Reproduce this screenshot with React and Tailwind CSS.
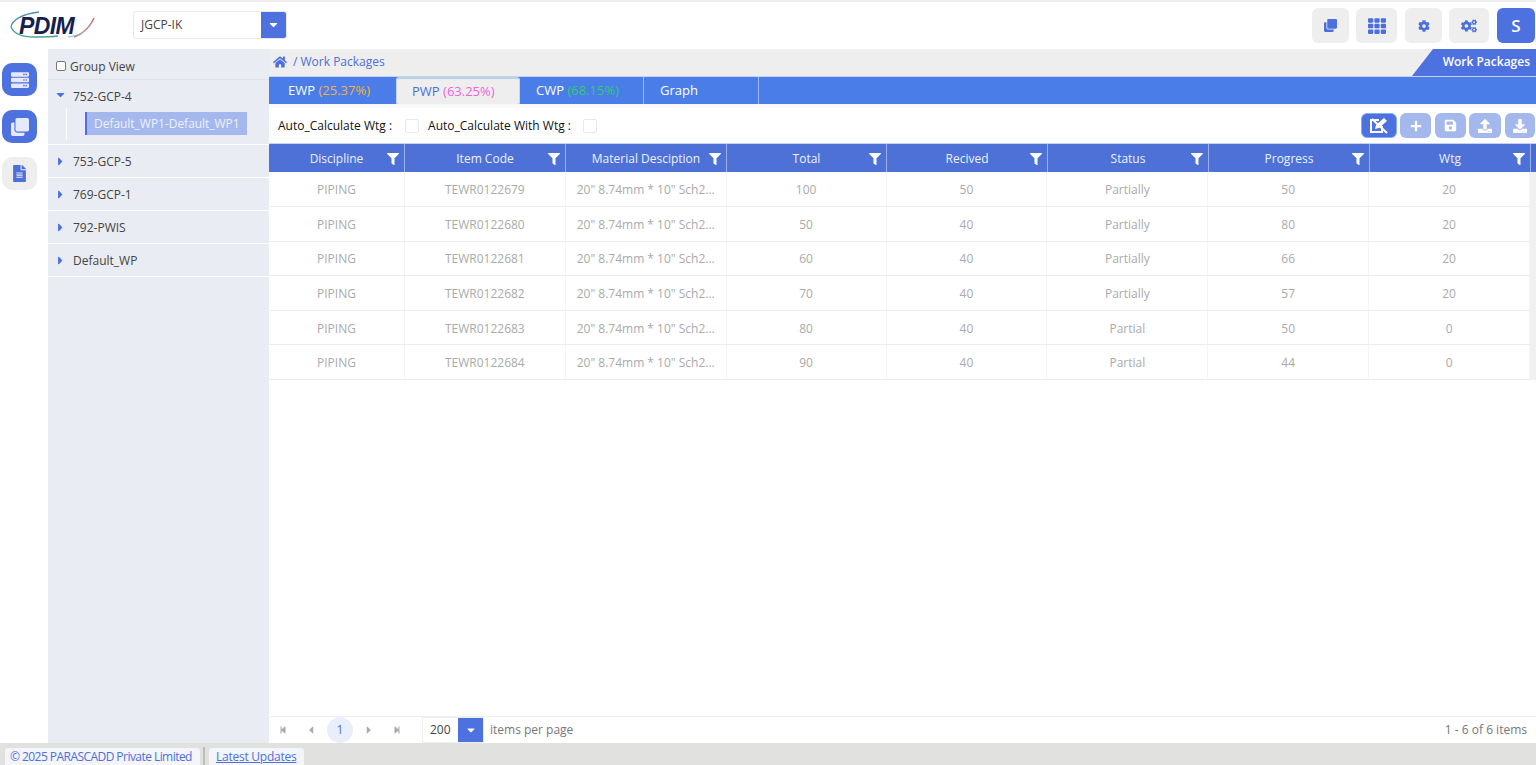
import React from "react";
import {
  FaHome,
  FaFilter,
  FaServer,
  FaClone,
  FaFileAlt,
  FaTh,
  FaCog,
  FaCogs,
  FaPlus,
  FaSave,
  FaUpload,
  FaDownload,
  FaStepBackward,
  FaStepForward,
  FaCaretLeft,
  FaCaretRight,
  FaCaretDown,
} from "react-icons/fa";

const columns = [
  { label: "Discipline", width: "w-[136px]" },
  { label: "Item Code", width: "w-[161px]" },
  { label: "Material Desciption", width: "w-[161px]" },
  { label: "Total", width: "w-[160px]" },
  { label: "Recived", width: "w-[161px]" },
  { label: "Status", width: "w-[161px]" },
  { label: "Progress", width: "w-[161px]" },
  { label: "Wtg", width: "w-[161px]" },
];

const rows = [
  ["PIPING", "TEWR0122679", '20" 8.74mm * 10" Sch2...', "100", "50", "Partially", "50", "20"],
  ["PIPING", "TEWR0122680", '20" 8.74mm * 10" Sch2...', "50", "40", "Partially", "80", "20"],
  ["PIPING", "TEWR0122681", '20" 8.74mm * 10" Sch2...', "60", "40", "Partially", "66", "20"],
  ["PIPING", "TEWR0122682", '20" 8.74mm * 10" Sch2...', "70", "40", "Partially", "57", "20"],
  ["PIPING", "TEWR0122683", '20" 8.74mm * 10" Sch2...', "80", "40", "Partial", "50", "0"],
  ["PIPING", "TEWR0122684", '20" 8.74mm * 10" Sch2...', "90", "40", "Partial", "44", "0"],
];

const treeItems = ["753-GCP-5", "769-GCP-1", "792-PWIS", "Default_WP"];

const Logo = () => (
  <div className="relative w-[86px] h-[30px] -mt-[2px]">
    <svg className="absolute inset-0" width="86" height="30" viewBox="0 0 86 30" fill="none">
      <path d="M1 17C2 10 12 4 29 2" stroke="#4d8fb0" strokeWidth="1.3" />
      <path d="M1 17C4 24 12 27 24 27C32 27 40 27 48 26" stroke="#4aa58f" strokeWidth="1.4" />
      <path d="M64 27C73 24 80 17 84 8" stroke="#e0705f" strokeWidth="1.5" />
      <path d="M58 27C68 26 76 22 81 14" stroke="#8fb2d9" strokeWidth="1" />
    </svg>
    <span className="absolute left-[9px] top-[2px] text-[23px] leading-[28px] font-bold italic text-[#14204d] font-['Liberation_Sans',sans-serif] tracking-[-0.6px]">
      PDIM
    </span>
  </div>
);

const TopButton = ({ width, children }) => (
  <div className={`${width} h-[35px] rounded-md bg-[#eeeeee] flex items-center justify-center text-[#4d6fdc]`}>
    {children}
  </div>
);

const RailButton = ({ active, children }) => (
  <div
    className={`w-[35px] h-[33px] rounded-[10px] flex items-center justify-center ${
      active ? "bg-[#4d71df] text-[#e4e9fb]" : "bg-[#eeeeee] text-[#4d6fdc]"
    }`}
  >
    {children}
  </div>
);

const ActionButton = ({ active, width, children }) => (
  <div
    className={`${width} h-[25px] rounded-md flex items-center justify-center text-white ${
      active ? "bg-[#4d71df] border border-[#7fb0f5]" : "bg-[#a5b8ee]"
    }`}
  >
    {children}
  </div>
);

const Tab = ({ label, pct, pctColor, width, active }) => (
  <div
    className={`${width} flex items-center text-[13px] pt-[1px] ${
      active
        ? "h-[29px] bg-[#eeeeee] text-[#4d6fdc] rounded-[3px] border-x border-t-2 border-b-2 border-x-[#c9d3ea] border-t-[#b5d6de] border-b-[#4d71df]"
        : "h-full text-white border-r border-[#9db8f2]"
    }`}
  >
    <span>
      {label} {pct && <span className={`${pctColor} font-medium`}>{pct}</span>}
    </span>
  </div>
);

const App = () => {
  return (
    <div className="w-[1536px] h-[765px] overflow-hidden flex flex-col bg-white text-[12px] text-[#555] font-['Open_Sans',sans-serif]">
      {/* Header */}
      <header className="h-[49px] shrink-0 flex items-center border-t-2 border-[#eeeeee] pl-[10px] pr-[1px]">
        <Logo />
        <div className="ml-[37px] -mt-[2px] w-[154px] h-[28px] flex rounded-[3px] border border-[#e8e8e8] overflow-hidden">
          <div className="flex-1 flex items-center pl-[7px] text-[12px] text-[#444]">JGCP-IK</div>
          <div className="w-[25px] bg-[#4d71df] flex items-center justify-center text-white">
            <FaCaretDown size={13} />
          </div>
        </div>
        <div className="ml-auto flex items-center">
          <TopButton width="w-[37px]">
            <FaClone size={13} />
          </TopButton>
          <div className="ml-[7px]">
            <TopButton width="w-[41px]">
              <FaTh size={18} />
            </TopButton>
          </div>
          <div className="ml-[8px]">
            <TopButton width="w-[37px]">
              <FaCog size={12} />
            </TopButton>
          </div>
          <div className="ml-[7px]">
            <TopButton width="w-[40px]">
              <FaCogs size={16} />
            </TopButton>
          </div>
          <div className="ml-[8px] w-[38px] h-[35px] rounded-md bg-[#4d71df] flex items-center justify-center text-white text-[17px] font-semibold">
            S
          </div>
        </div>
      </header>

      <div className="flex-1 flex min-h-0">
        {/* Icon rail */}
        <aside className="w-[48px] shrink-0 flex flex-col gap-[14px] pl-[2px] pt-[14px]">
          <RailButton active>
            <FaServer size={18} />
          </RailButton>
          <RailButton active>
            <FaClone size={18} />
          </RailButton>
          <RailButton>
            <FaFileAlt size={17} />
          </RailButton>
        </aside>

        {/* Tree */}
        <aside className="w-[221px] shrink-0 bg-[#e9ecf2] text-[12px] text-[#444]">
          <div className="h-[31px] flex items-center pl-[8px] pt-[6px] border-b border-[#e0e3ea] gap-[4px]">
            <span className="w-[10px] h-[10px] rounded-[2px] border border-[#777] bg-white -mt-[3px]" />
            <span>Group View</span>
          </div>
          <div className="border-b border-white pb-[4px]">
            <div className="h-[28px] pt-[6px] flex items-center pl-[6px]">
              <FaCaretDown size={13} className="text-[#4d71df] -mt-[6px]" />
              <span className="ml-[6px]">752-GCP-4</span>
            </div>
            <div className="ml-[18px] border-l border-white h-[32px] pl-[18px] pt-[4px]">
              <div className="w-[162px] h-[23px] bg-[#a5b8ee] border-l-2 border-[#4d71df] flex items-center pl-[7px] text-[#eef1fb] tracking-[-0.03px] whitespace-nowrap">
                Default_WP1-Default_WP1
              </div>
            </div>
          </div>
          {treeItems.map((item) => (
            <div key={item} className="h-[33px] flex items-center pl-[6px] pt-[2px] border-b border-white">
              <FaCaretRight size={13} className="text-[#4d71df] -mt-[2px]" />
              <span className="ml-[6px]">{item}</span>
            </div>
          ))}
        </aside>

        {/* Main */}
        <main className="flex-1 min-w-0 flex flex-col">
          <div className="h-[27px] shrink-0 bg-[#eeeeee] flex items-center justify-between pl-[4px]">
            <div className="flex items-center gap-[6px] text-[12px] text-[#4d6fdc] -mt-[2px]">
              <FaHome size={14} />
              <span>/ Work Packages</span>
            </div>
            <div className="relative w-[124px] h-full self-end flex items-center justify-end pr-[6px] text-white text-[12px] font-semibold">
              <svg className="absolute inset-0" width="124" height="27" viewBox="0 0 124 27">
                <path d="M21 0H124V27H0Z" fill="#4d71df" />
              </svg>
              <span className="relative -mt-[2px]">Work Packages</span>
            </div>
          </div>

          <div className="h-[28px] shrink-0 bg-[#4a7de8] border-t border-[#c5d2f2] flex">
            <Tab label="EWP" pct="(25.37%)" pctColor="text-[#f5b041]" width="w-[127px] pl-[19px] !border-r-0" />
            <Tab label="PWP" pct="(63.25%)" pctColor="text-[#f25fe0]" width="w-[124px] pl-[15px]" active />
            <Tab label="CWP" pct="(68.15%)" pctColor="text-[#2ecc71]" width="w-[124px] pl-[16px]" />
            <Tab label="Graph" width="w-[115px] pl-[16px]" />
          </div>

          <div className="h-[4px] shrink-0 bg-[#f8f8f8]" />

          <div className="h-[35px] shrink-0 flex items-center pl-[9px] pr-[1px] text-[12px] text-[#111]">
            <span>Auto_Calculate Wtg :</span>
            <span className="ml-[13px] w-[14px] h-[14px] rounded-[2px] border border-[#e8e8e8]" />
            <span className="ml-[9px]">Auto_Calculate With Wtg :</span>
            <span className="ml-[12px] w-[14px] h-[14px] rounded-[2px] border border-[#e8e8e8]" />
            <div className="ml-auto flex items-center">
              <ActionButton width="w-[36px]" active>
                <svg width="20" height="17" viewBox="0 0 20 17" fill="none" stroke="white" strokeWidth="2">
                  <path d="M10 3H2v12h11V9" />
                  <path d="M6 12l1-4 8-7 3 3-8 7z" fill="white" stroke="none" />
                  <path d="M3 2l15 14" />
                </svg>
              </ActionButton>
              <div className="ml-[3px]">
                <ActionButton width="w-[31px]">
                  <FaPlus size={12} />
                </ActionButton>
              </div>
              <div className="ml-[4px]">
                <ActionButton width="w-[31px]">
                  <FaSave size={13} />
                </ActionButton>
              </div>
              <div className="ml-[3px]">
                <ActionButton width="w-[32px]">
                  <FaUpload size={14} />
                </ActionButton>
              </div>
              <div className="ml-[4px]">
                <ActionButton width="w-[30px]">
                  <FaDownload size={14} />
                </ActionButton>
              </div>
            </div>
          </div>

          {/* Table */}
          <div className="flex-1 min-h-0 flex flex-col">
            <div className="h-[29px] shrink-0 flex bg-[#4d71d6] border-t border-[#c5d2f2]">
              {columns.map((col) => (
                <div
                  key={col.label}
                  className={`${col.width} relative flex items-center justify-center pt-[1px] border-r border-[#9db0e8] text-[#eef1fb] text-[12px]`}
                >
                  {col.label}
                  <FaFilter size={12} className="absolute right-[5px] text-white" />
                </div>
              ))}
              <div className="flex-1 bg-[#4a6cd0]" />
            </div>
            <div className="flex-1 min-h-0 flex">
              <div className="w-[1261px]">
                {rows.map((row, r) => (
                  <div key={row[1]} className={`flex border-b border-[#ececec] ${r === 0 ? "h-[35px]" : "h-[34.6px]"}`}>
                    {row.map((cell, i) => (
                      <div
                        key={i}
                        className={`${columns[i].width} flex items-center justify-center pt-[2px] border-r border-[#f4f4f4] text-[#aaaaaa] text-[12px] whitespace-nowrap`}
                      >
                        {cell}
                      </div>
                    ))}
                  </div>
                ))}
              </div>
              <div className="flex-1 bg-[#f0f0f0] h-[208px]" />
            </div>
          </div>

          {/* Pager */}
          <div className="h-[27px] shrink-0 border-t border-[#eeeeee] flex items-center pl-[10px] pr-[9px] text-[12px] text-[#777]">
            <FaStepBackward size={8} className="text-[#aaa]" />
            <FaCaretLeft size={12} className="ml-[18px] text-[#aaa]" />
            <div className="ml-[10px] w-[26px] h-[26px] rounded-full bg-[#e8effb] text-[#4d6fdc] flex items-center justify-center">
              1
            </div>
            <FaCaretRight size={12} className="ml-[10px] text-[#aaa]" />
            <FaStepForward size={8} className="ml-[18px] text-[#aaa]" />
            <div className="ml-[21px] w-[62px] h-full flex border border-[#eeeeee]">
              <div className="flex-1 flex items-center pl-[7px] text-[#444]">200</div>
              <div className="w-[25px] bg-[#4d71df] text-white flex items-center justify-center">
                <FaCaretDown size={12} />
              </div>
            </div>
            <span className="ml-[6px]">items per page</span>
            <span className="ml-auto">1 - 6 of 6 items</span>
          </div>
        </main>
      </div>

      {/* Footer */}
      <footer className="h-[22px] shrink-0 bg-[#e1e1df] flex items-end pl-[5px] text-[12px] text-[#4d6fdc]">
        <div className="h-[17px] w-[195px] bg-[#f3f5fb] rounded-t-[3px] flex items-center pl-[5px] tracking-[-0.55px] whitespace-nowrap">
          © 2025 PARASCADD Private Limited
        </div>
        <div className="w-[2px] h-[18px] bg-[#bdbdbd] ml-[3px]" />
        <div className="ml-[4px] h-[17px] w-[95px] bg-[#f3f5fb] rounded-t-[3px] flex items-center pl-[7px] underline tracking-[-0.25px] whitespace-nowrap">
          Latest Updates
        </div>
      </footer>
    </div>
  );
};

export default App;
